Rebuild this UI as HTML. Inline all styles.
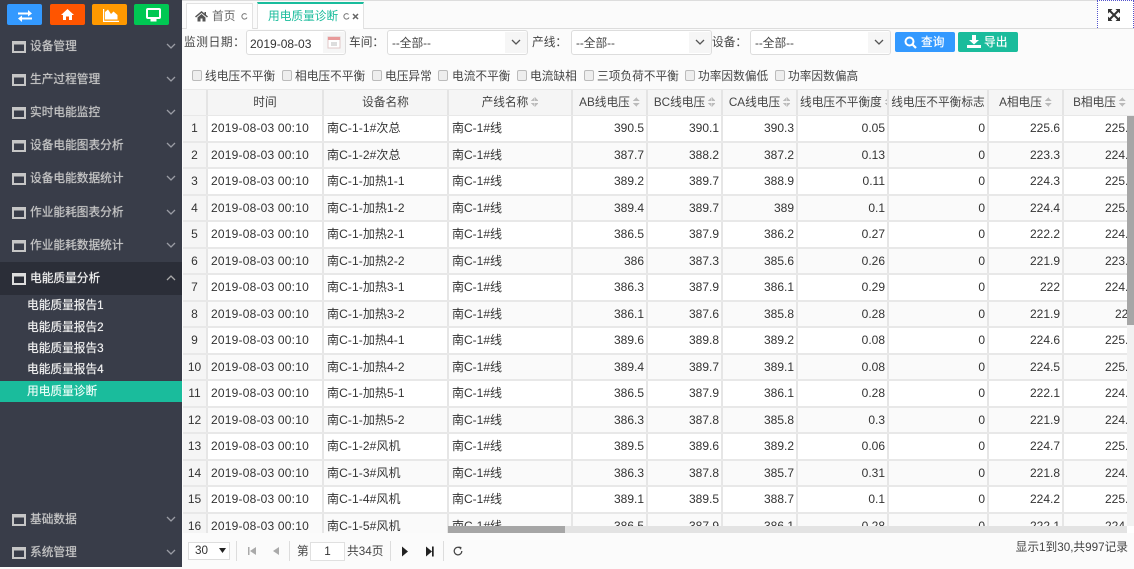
<!DOCTYPE html>
<html lang="zh"><head><meta charset="utf-8"><title>用电质量诊断</title>
<style>
*{box-sizing:border-box}
html,body{margin:0;padding:0}
body{width:1134px;height:567px;overflow:hidden;position:relative;background:#fbfbfb;font:11.7px/16px "Liberation Sans","Noto Sans CJK SC",sans-serif;color:#444}
.a{position:absolute;white-space:nowrap}
#side{position:absolute;left:0;top:0;width:182px;height:567px;background:#393d49}
.tb{position:absolute;top:4px;width:35px;height:21px;border-radius:2px}
.tb svg{position:absolute;left:0;top:0}
.m{position:absolute;left:0;width:182px;height:33px;color:#c6c6c6;text-shadow:0 0 .7px #c6c6c6}
.m.on{background:#2b2e38;color:#f0f0f0;text-shadow:0 0 .7px #f0f0f0}
.m svg.w{position:absolute;left:12px;top:11px}
.m span{position:absolute;left:30px;top:9px}
.m svg.c{position:absolute;left:166px;top:13px}
.s{position:absolute;left:27px;color:#f0f0f0;line-height:16px;text-shadow:0 0 .5px #f0f0f0}
#act{position:absolute;left:0;top:381px;width:182px;height:21px;background:#1abc9c}
#top{position:absolute;left:182px;top:0;width:952px;height:29px;border-top:1px solid #ddd;border-bottom:1px solid #ddd;background:#fbfbfb}
.inp{position:absolute;top:30px;height:25px;background:#fff;border:1px solid #ddd;border-radius:3px;color:#444;padding:5px 0 0 4px}
.inp i{position:absolute;right:0;top:1px;width:22px;height:21px;background:#f6f6f6}
.inp svg{position:absolute;right:6px;top:8px}
.btn{position:absolute;top:32px;width:60px;height:20px;border-radius:2px;color:#fff;text-shadow:0 0 .5px #fff}
.btn span{position:absolute;left:26px;top:3px}
.cb{position:absolute;top:70px;width:10px;height:11px;background:#eee;border:1px solid #bbb;border-radius:2px}
#hd{position:absolute;left:183px;top:89px;width:951px;height:27px;background:#f5f5f5;display:flex;border-top:1px solid #e8e8e8;border-bottom:1px solid #e8e8e8;overflow:hidden}
#hd div{flex:none;height:25px;border-right:2px solid #e4e4e4;text-align:center;line-height:26px;white-space:nowrap;color:#444;overflow:hidden}
#hd b{display:inline-block;width:7px;height:10px;margin-left:3px;vertical-align:-1px;background:
 linear-gradient(to top left,#bbb 50%,transparent 51%) 0 0/3.5px 4px no-repeat,
 linear-gradient(to top right,#bbb 50%,transparent 51%) 3.5px 0/3.5px 4px no-repeat,
 linear-gradient(to bottom left,#bbb 50%,transparent 51%) 0 6px/3.5px 4px no-repeat,
 linear-gradient(to bottom right,#bbb 50%,transparent 51%) 3.5px 6px/3.5px 4px no-repeat}
#hd div.c8{text-align:left;padding-left:2px}
#body{position:absolute;left:183px;top:116px;width:951px;height:417px;overflow:hidden;font-size:12px}
.r{display:flex;height:26.5px;background:#fff;border-bottom:2px solid #e8e8e8}
.r:nth-child(even){background:#fafafa}
.r div{flex:none;height:100%;border-right:2px solid #e6e6e6;white-space:nowrap;overflow:hidden;line-height:24px;color:#333;text-align:right;padding-right:2px}
.r div:nth-child(1){background:#f5f5f5;text-align:center;padding:0}
.r div:nth-child(2){text-align:left;padding-left:3px;letter-spacing:.2px}
.r div:nth-child(3){text-align:left;padding-left:3px;letter-spacing:.1px}
.r div:nth-child(4){text-align:left;padding-left:3px}
.c1{width:25px}.c2{width:116px}.c3{width:125px}.c4{width:124px}.c5{width:75px}.c6{width:75px}.c7{width:75px}.c8{width:91px}.c9{width:100px}.c10{width:75px}.c11{width:71px}
.r .c11{padding-right:0;border-right:0;overflow:visible}
#vs{position:absolute;left:1127px;top:116px;width:7px;height:410px;background:#f1f1f1}
#vs i{position:absolute;left:0;top:0;width:7px;height:209px;background:#a6a6a6}
#hs{position:absolute;left:448px;top:526px;width:686px;height:7px;background:#e3e3e3}
#hs i{position:absolute;left:0;top:0;width:117px;height:7px;background:#a6a6a6}
#hs u{position:absolute;right:0;top:0;width:7px;height:7px;background:#fff}
.sep{position:absolute;top:541px;width:1px;height:20px;background:#ddd}
</style></head><body>
<div id="side">
<div class="tb" style="left:7px;background:#3399ff"><svg width="35" height="21"><path d="M11 8.500h10V6l4 3.500-4 3v-2H11zM25 13.500v2H15V18l-4-3.500 4-3v2z" fill="#fff"/></svg></div>
<div class="tb" style="left:50px;background:#ff5500"><svg width="35" height="21"><path d="M17.500 5l-6.500 6h2v5h3v-3.500h3V16h3v-5h2z" fill="#fff"/></svg></div>
<div class="tb" style="left:92px;background:#ff9900"><svg width="35" height="21"><path d="M11 5v13h16v-1.200H12.200V5zM13 15.500V8l3-2.500 3 4.500 2.500-2.500 4 3.500v4.500z" fill="#fff"/></svg></div>
<div class="tb" style="left:134px;background:#00c853"><svg width="35" height="21"><rect x="13" y="5" width="13" height="9" rx="1" fill="none" stroke="#fff" stroke-width="2"/><rect x="16.500" y="15" width="6" height="2.500" fill="#fff"/></svg></div>

<div class="m" style="top:30px"><svg class="w" width="14" height="12"><rect x="1" y="1" width="12" height="10" fill="none" stroke="#c6c6c6" stroke-width="2"/><rect x="1" y="1" width="12" height="2.500" fill="#c6c6c6"/></svg><span>设备管理</span><svg class="c" width="10" height="6"><path d="M1 1l4 4 4-4" fill="none" stroke="#9a9ca4" stroke-width="1.300"/></svg></div>
<div class="m" style="top:63px"><svg class="w" width="14" height="12"><rect x="1" y="1" width="12" height="10" fill="none" stroke="#c6c6c6" stroke-width="2"/><rect x="1" y="1" width="12" height="2.500" fill="#c6c6c6"/></svg><span>生产过程管理</span><svg class="c" width="10" height="6"><path d="M1 1l4 4 4-4" fill="none" stroke="#9a9ca4" stroke-width="1.300"/></svg></div>
<div class="m" style="top:96px"><svg class="w" width="14" height="12"><rect x="1" y="1" width="12" height="10" fill="none" stroke="#c6c6c6" stroke-width="2"/><rect x="1" y="1" width="12" height="2.500" fill="#c6c6c6"/></svg><span>实时电能监控</span><svg class="c" width="10" height="6"><path d="M1 1l4 4 4-4" fill="none" stroke="#9a9ca4" stroke-width="1.300"/></svg></div>
<div class="m" style="top:129px"><svg class="w" width="14" height="12"><rect x="1" y="1" width="12" height="10" fill="none" stroke="#c6c6c6" stroke-width="2"/><rect x="1" y="1" width="12" height="2.500" fill="#c6c6c6"/></svg><span>设备电能图表分析</span><svg class="c" width="10" height="6"><path d="M1 1l4 4 4-4" fill="none" stroke="#9a9ca4" stroke-width="1.300"/></svg></div>
<div class="m" style="top:162px"><svg class="w" width="14" height="12"><rect x="1" y="1" width="12" height="10" fill="none" stroke="#c6c6c6" stroke-width="2"/><rect x="1" y="1" width="12" height="2.500" fill="#c6c6c6"/></svg><span>设备电能数据统计</span><svg class="c" width="10" height="6"><path d="M1 1l4 4 4-4" fill="none" stroke="#9a9ca4" stroke-width="1.300"/></svg></div>
<div class="m" style="top:196px"><svg class="w" width="14" height="12"><rect x="1" y="1" width="12" height="10" fill="none" stroke="#c6c6c6" stroke-width="2"/><rect x="1" y="1" width="12" height="2.500" fill="#c6c6c6"/></svg><span>作业能耗图表分析</span><svg class="c" width="10" height="6"><path d="M1 1l4 4 4-4" fill="none" stroke="#9a9ca4" stroke-width="1.300"/></svg></div>
<div class="m" style="top:229px"><svg class="w" width="14" height="12"><rect x="1" y="1" width="12" height="10" fill="none" stroke="#c6c6c6" stroke-width="2"/><rect x="1" y="1" width="12" height="2.500" fill="#c6c6c6"/></svg><span>作业能耗数据统计</span><svg class="c" width="10" height="6"><path d="M1 1l4 4 4-4" fill="none" stroke="#9a9ca4" stroke-width="1.300"/></svg></div>
<div class="m on" style="top:262px"><svg class="w" width="14" height="12"><rect x="1" y="1" width="12" height="10" fill="none" stroke="#ddd" stroke-width="2"/><rect x="1" y="1" width="12" height="2.500" fill="#ddd"/></svg><span>电能质量分析</span><svg class="c" width="10" height="6"><path d="M1 5l4-4 4 4" fill="none" stroke="#aaa" stroke-width="1.300"/></svg></div>
<div class="s" style="top:298px">电能质量报告1</div>
<div class="s" style="top:320px">电能质量报告2</div>
<div class="s" style="top:341px">电能质量报告3</div>
<div class="s" style="top:362px">电能质量报告4</div>
<div id="act"></div>
<div class="s" style="top:384px;color:#e8fff8">用电质量诊断</div>
<div class="m" style="top:503px"><svg class="w" width="14" height="12"><rect x="1" y="1" width="12" height="10" fill="none" stroke="#c6c6c6" stroke-width="2"/><rect x="1" y="1" width="12" height="2.500" fill="#c6c6c6"/></svg><span>基础数据</span><svg class="c" width="10" height="6"><path d="M1 1l4 4 4-4" fill="none" stroke="#9a9ca4" stroke-width="1.300"/></svg></div>
<div class="m" style="top:536px"><svg class="w" width="14" height="12"><rect x="1" y="1" width="12" height="10" fill="none" stroke="#c6c6c6" stroke-width="2"/><rect x="1" y="1" width="12" height="2.500" fill="#c6c6c6"/></svg><span>系统管理</span><svg class="c" width="10" height="6"><path d="M1 1l4 4 4-4" fill="none" stroke="#9a9ca4" stroke-width="1.300"/></svg></div>
</div>

<div id="top"></div>
<div class="a" style="left:186px;top:3px;width:67px;height:26px;background:#fff;border:1px solid #e2e2e2;border-bottom:0"></div>
<svg class="a" style="left:195px;top:10px" width="13" height="12"><path d="M6.500 1L0 6.500l1 1 5.500-4.500 5.500 4.500 1-1-2-1.700V2H9.500v1.500zM2.500 7.500V11.500h3V8.500h2v3h3V7.500L6.500 4z" fill="#555"/></svg>
<div class="a" style="left:212px;top:9px;color:#666">首页</div>
<svg class="a" style="left:241px;top:13px" width="7" height="7"><path d="M5.500 1.500A2.700 2.700 0 1 0 6 4.500" fill="none" stroke="#777" stroke-width="1"/></svg>
<div class="a" style="left:257px;top:2px;width:107px;height:27px;background:#fff;border:1px solid #e2e2e2;border-top:2px solid #1abc9c;border-bottom:0"></div>
<div class="a" style="left:268px;top:9px;color:#1abc9c">用电质量诊断</div>
<svg class="a" style="left:343px;top:13px" width="7" height="7"><path d="M5.500 1.500A2.700 2.700 0 1 0 6 4.500" fill="none" stroke="#777" stroke-width="1"/></svg>
<svg class="a" style="left:352px;top:13px" width="7" height="7"><path d="M1 1l5 5M6 1L1 6" stroke="#666" stroke-width="1.500"/></svg>
<div class="a" style="left:1097px;top:0;width:37px;height:28px;background:#fff;border:1px dotted #5555cc;border-bottom:0"></div>
<svg class="a" style="left:1108px;top:9px" width="12" height="12"><path d="M2 2l8 8M10 2l-8 8" stroke="#333" stroke-width="2"/><path d="M0 0h4.500L0 4.500zM12 0v4.500L7.500 0zM0 12V7.500L4.500 12zM12 12H7.500L12 7.500z" fill="#333"/></svg>

<div class="a" style="left:184px;top:35px;letter-spacing:.6px">监测日期：</div>
<div class="inp" style="left:246px;width:100px;padding-left:3px;color:#333;font-size:12px">2019-08-03<i></i></div>
<svg class="a" style="left:327px;top:35px" width="14" height="14"><rect x="1" y="2" width="12" height="11" fill="#fff" stroke="#e0c8c8"/><rect x="1" y="2" width="12" height="3" fill="#e89a9a"/><rect x="4" y="7" width="6" height="4" fill="#ddd"/></svg>
<div class="a" style="left:349px;top:35px">车间：</div>
<div class="inp" style="left:387px;width:141px">--全部--<i></i><svg width="10" height="6"><path d="M1 1l4 4 4-4" fill="none" stroke="#555" stroke-width="1.300"/></svg></div>
<div class="a" style="left:532px;top:35px">产线：</div>
<div class="inp" style="left:571px;width:141px">--全部--<i></i><svg width="10" height="6"><path d="M1 1l4 4 4-4" fill="none" stroke="#555" stroke-width="1.300"/></svg></div>
<div class="a" style="left:712px;top:35px">设备：</div>
<div class="inp" style="left:750px;width:141px">--全部--<i></i><svg width="10" height="6"><path d="M1 1l4 4 4-4" fill="none" stroke="#555" stroke-width="1.300"/></svg></div>
<div class="btn" style="left:895px;background:#3399ff"><svg class="a" style="left:9px;top:4px" width="13" height="13"><circle cx="5.500" cy="5.500" r="4" fill="none" stroke="#fff" stroke-width="2"/><path d="M8.500 8.500l3.500 3.500" stroke="#fff" stroke-width="2.200"/></svg><span>查询</span></div>
<div class="btn" style="left:958px;background:#1abc9c"><svg class="a" style="left:9px;top:3px" width="14" height="13"><path d="M5 0h4v5h3L7 9.500 2 5h3zM0 10h14v3H0z" fill="#fff"/></svg><span>导出</span></div>

<div class="cb" style="left:192px"></div><div class="a" style="left:205px;top:69px">线电压不平衡</div>
<div class="cb" style="left:282px"></div><div class="a" style="left:295px;top:69px">相电压不平衡</div>
<div class="cb" style="left:372px"></div><div class="a" style="left:385px;top:69px">电压异常</div>
<div class="cb" style="left:438px"></div><div class="a" style="left:452px;top:69px">电流不平衡</div>
<div class="cb" style="left:517px"></div><div class="a" style="left:530px;top:69px">电流缺相</div>
<div class="cb" style="left:584px"></div><div class="a" style="left:597px;top:69px">三项负荷不平衡</div>
<div class="cb" style="left:685px"></div><div class="a" style="left:698px;top:69px">功率因数偏低</div>
<div class="cb" style="left:775px"></div><div class="a" style="left:788px;top:69px">功率因数偏高</div>

<div id="hd">
<div class="c1"></div><div class="c2">时间</div><div class="c3">设备名称</div><div class="c4">产线名称<b></b></div><div class="c5">AB线电压<b></b></div><div class="c6">BC线电压<b></b></div><div class="c7">CA线电压<b></b></div><div class="c8">线电压不平衡度<b></b></div><div class="c9">线电压不平衡标志</div><div class="c10">A相电压<b></b></div><div class="c11" style="border:0">B相电压<b></b></div>
</div>
<div id="body">
<div class="r"><div class="c1">1</div><div class="c2">2019-08-03 00:10</div><div class="c3">南C-1-1#次总</div><div class="c4">南C-1#线</div><div class="c5">390.5</div><div class="c6">390.1</div><div class="c7">390.3</div><div class="c8">0.05</div><div class="c9">0</div><div class="c10">225.6</div><div class="c11">225.1</div></div>
<div class="r"><div class="c1">2</div><div class="c2">2019-08-03 00:10</div><div class="c3">南C-1-2#次总</div><div class="c4">南C-1#线</div><div class="c5">387.7</div><div class="c6">388.2</div><div class="c7">387.2</div><div class="c8">0.13</div><div class="c9">0</div><div class="c10">223.3</div><div class="c11">224.1</div></div>
<div class="r"><div class="c1">3</div><div class="c2">2019-08-03 00:10</div><div class="c3">南C-1-加热1-1</div><div class="c4">南C-1#线</div><div class="c5">389.2</div><div class="c6">389.7</div><div class="c7">388.9</div><div class="c8">0.11</div><div class="c9">0</div><div class="c10">224.3</div><div class="c11">225.1</div></div>
<div class="r"><div class="c1">4</div><div class="c2">2019-08-03 00:10</div><div class="c3">南C-1-加热1-2</div><div class="c4">南C-1#线</div><div class="c5">389.4</div><div class="c6">389.7</div><div class="c7">389</div><div class="c8">0.1</div><div class="c9">0</div><div class="c10">224.4</div><div class="c11">225.1</div></div>
<div class="r"><div class="c1">5</div><div class="c2">2019-08-03 00:10</div><div class="c3">南C-1-加热2-1</div><div class="c4">南C-1#线</div><div class="c5">386.5</div><div class="c6">387.9</div><div class="c7">386.2</div><div class="c8">0.27</div><div class="c9">0</div><div class="c10">222.2</div><div class="c11">224.1</div></div>
<div class="r"><div class="c1">6</div><div class="c2">2019-08-03 00:10</div><div class="c3">南C-1-加热2-2</div><div class="c4">南C-1#线</div><div class="c5">386</div><div class="c6">387.3</div><div class="c7">385.6</div><div class="c8">0.26</div><div class="c9">0</div><div class="c10">221.9</div><div class="c11">223.1</div></div>
<div class="r"><div class="c1">7</div><div class="c2">2019-08-03 00:10</div><div class="c3">南C-1-加热3-1</div><div class="c4">南C-1#线</div><div class="c5">386.3</div><div class="c6">387.9</div><div class="c7">386.1</div><div class="c8">0.29</div><div class="c9">0</div><div class="c10">222</div><div class="c11">224.1</div></div>
<div class="r"><div class="c1">8</div><div class="c2">2019-08-03 00:10</div><div class="c3">南C-1-加热3-2</div><div class="c4">南C-1#线</div><div class="c5">386.1</div><div class="c6">387.6</div><div class="c7">385.8</div><div class="c8">0.28</div><div class="c9">0</div><div class="c10">221.9</div><div class="c11">224</div></div>
<div class="r"><div class="c1">9</div><div class="c2">2019-08-03 00:10</div><div class="c3">南C-1-加热4-1</div><div class="c4">南C-1#线</div><div class="c5">389.6</div><div class="c6">389.8</div><div class="c7">389.2</div><div class="c8">0.08</div><div class="c9">0</div><div class="c10">224.6</div><div class="c11">225.1</div></div>
<div class="r"><div class="c1">10</div><div class="c2">2019-08-03 00:10</div><div class="c3">南C-1-加热4-2</div><div class="c4">南C-1#线</div><div class="c5">389.4</div><div class="c6">389.7</div><div class="c7">389.1</div><div class="c8">0.08</div><div class="c9">0</div><div class="c10">224.5</div><div class="c11">225.1</div></div>
<div class="r"><div class="c1">11</div><div class="c2">2019-08-03 00:10</div><div class="c3">南C-1-加热5-1</div><div class="c4">南C-1#线</div><div class="c5">386.5</div><div class="c6">387.9</div><div class="c7">386.1</div><div class="c8">0.28</div><div class="c9">0</div><div class="c10">222.1</div><div class="c11">224.1</div></div>
<div class="r"><div class="c1">12</div><div class="c2">2019-08-03 00:10</div><div class="c3">南C-1-加热5-2</div><div class="c4">南C-1#线</div><div class="c5">386.3</div><div class="c6">387.8</div><div class="c7">385.8</div><div class="c8">0.3</div><div class="c9">0</div><div class="c10">221.9</div><div class="c11">224.1</div></div>
<div class="r"><div class="c1">13</div><div class="c2">2019-08-03 00:10</div><div class="c3">南C-1-2#风机</div><div class="c4">南C-1#线</div><div class="c5">389.5</div><div class="c6">389.6</div><div class="c7">389.2</div><div class="c8">0.06</div><div class="c9">0</div><div class="c10">224.7</div><div class="c11">225.1</div></div>
<div class="r"><div class="c1">14</div><div class="c2">2019-08-03 00:10</div><div class="c3">南C-1-3#风机</div><div class="c4">南C-1#线</div><div class="c5">386.3</div><div class="c6">387.8</div><div class="c7">385.7</div><div class="c8">0.31</div><div class="c9">0</div><div class="c10">221.8</div><div class="c11">224.1</div></div>
<div class="r"><div class="c1">15</div><div class="c2">2019-08-03 00:10</div><div class="c3">南C-1-4#风机</div><div class="c4">南C-1#线</div><div class="c5">389.1</div><div class="c6">389.5</div><div class="c7">388.7</div><div class="c8">0.1</div><div class="c9">0</div><div class="c10">224.2</div><div class="c11">225.1</div></div>
<div class="r"><div class="c1">16</div><div class="c2">2019-08-03 00:10</div><div class="c3">南C-1-5#风机</div><div class="c4">南C-1#线</div><div class="c5">386.5</div><div class="c6">387.9</div><div class="c7">386.1</div><div class="c8">0.28</div><div class="c9">0</div><div class="c10">222.1</div><div class="c11">224.1</div></div>
</div>
<div id="vs"><i></i></div>
<div id="hs"><i></i><u></u></div>

<div class="a" style="left:188px;top:542px;width:42px;height:18px;background:#fff;border:1px solid #ddd;padding:0 0 0 6px;line-height:16px;color:#333">30</div>
<svg class="a" style="left:219px;top:548px" width="7" height="5"><path d="M0 0h7L3.500 5z" fill="#222"/></svg>
<div class="sep" style="left:236px"></div>
<svg class="a" style="left:247px;top:546px" width="10" height="10"><path d="M1 1h1.500v8H1zM9 1v8L3 5z" fill="#aaa"/></svg>
<svg class="a" style="left:272px;top:546px" width="8" height="10"><path d="M7 1v8L1 5z" fill="#aaa"/></svg>
<div class="sep" style="left:289px"></div>
<div class="a" style="left:297px;top:544px;color:#444">第</div>
<div class="a" style="left:310px;top:542px;width:35px;height:19px;background:#fff;border:1px solid #e0e0e0;text-align:center;line-height:18px;color:#333">1</div>
<div class="a" style="left:347px;top:544px;color:#444">共34页</div>
<div class="sep" style="left:390px"></div>
<svg class="a" style="left:401px;top:546px" width="8" height="11"><path d="M1 0.500v10l6-5z" fill="#222"/></svg>
<svg class="a" style="left:425px;top:546px" width="10" height="11"><path d="M1 0.500v10l6-5zM7 0.500h1.700v10H7z" fill="#222"/></svg>
<div class="sep" style="left:443px"></div>
<svg class="a" style="left:453px;top:546px" width="10" height="10"><path d="M7.500 2.200A3.800 3.800 0 1 0 8.800 5" fill="none" stroke="#444" stroke-width="1.200"/><path d="M5.500 0.500l3 .5-.5 3z" fill="#444"/></svg>
<div class="a" style="right:6px;top:540px;color:#444">显示1到30,共997记录</div>
</body></html>
